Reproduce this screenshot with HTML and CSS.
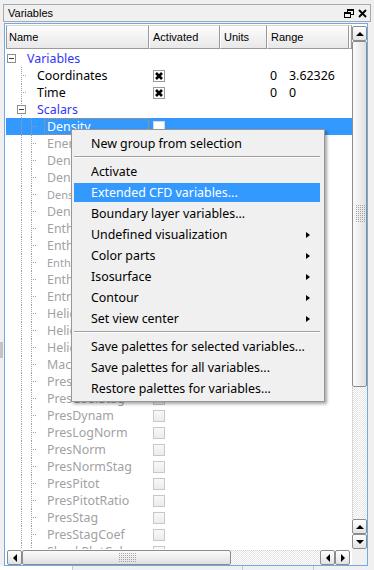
FILE: index.html
```html
<!DOCTYPE html>
<html lang="en">
<head>
<meta charset="UTF-8">
<title>Variables</title>
<link rel="stylesheet" href="styles.css">
</head>
<body>
<div class="title">
  <span>Variables</span>
  <div class="title-btns">
    <svg width="10" height="9" viewBox="0 0 10 9"><g fill="#000"><rect x="3" y="0" width="7" height="2"/><rect x="9" y="2" width="1" height="4"/><rect x="7" y="5" width="3" height="1"/><rect x="3" y="2" width="1" height="1"/><rect x="0" y="3" width="7" height="2"/><rect x="0" y="5" width="1" height="4"/><rect x="6" y="5" width="1" height="4"/><rect x="0" y="8" width="7" height="1"/></g></svg>
    <svg width="9" height="9" viewBox="0 0 9 9"><path d="M1 1L8 8M8 1L1 8" stroke="#000" stroke-width="1.8"/></svg>
  </div>
</div>

<div class="wrap">
  <div class="gutter"><div class="split"></div></div>
  <div class="frame">
    <div class="top">
      <div class="main">
        <div class="hdr">
          <div class="h c-name">Name</div>
          <div class="h c-act">Activated</div>
          <div class="h c-units">Units</div>
          <div class="h c-range">Range</div>
          <div class="h c-fill"></div>
        </div>
        <div class="rows">
          <div class="row">
            <div class="c-name"><span class="g x root"><i class="exp"></i></span><span class="g"></span><span class="lbl blue">Variables</span></div>
          </div>
          <div class="row">
            <div class="c-name"><span class="g"></span><span class="g t"></span><span class="g"></span><span class="lbl">Coordinates</span></div>
            <div class="c-act"><span class="cb on"><svg width="10" height="10" viewBox="0 0 10 10"><path d="M2 2L8 8M8 2L2 8" stroke="#000" stroke-width="2.6"/></svg></span></div>
            <div class="c-units"></div>
            <div class="c-range"><span class="rmin">0</span><span>3.62326</span></div>
          </div>
          <div class="row">
            <div class="c-name"><span class="g"></span><span class="g t"></span><span class="g"></span><span class="lbl">Time</span></div>
            <div class="c-act"><span class="cb on"><svg width="10" height="10" viewBox="0 0 10 10"><path d="M2 2L8 8M8 2L2 8" stroke="#000" stroke-width="2.6"/></svg></span></div>
            <div class="c-units"></div>
            <div class="c-range"><span class="rmin">0</span><span>0</span></div>
          </div>
          <div class="row">
            <div class="c-name"><span class="g"></span><span class="g x"><i class="exp"></i></span><span class="g"></span><span class="lbl blue">Scalars</span></div>
          </div>
          <div class="row sel">
            <div class="c-name"><span class="g"></span><span class="g v"></span><span class="g t"></span><span class="g"></span><span class="lbl focus">Density</span></div>
            <div class="c-act"><span class="cb white"></span></div>
          </div>
          <div id="scalars"></div>
        </div>
      </div>
      <div class="vscroll">
        <div class="sbtn up"></div>
        <div class="vthumb"><span class="grip vg"></span></div>
        <div class="track"></div>
        <div class="sbtn up"></div>
        <div class="sbtn down"></div>
      </div>
    </div>
    <div class="hscroll">
      <div class="sbtn left"></div>
      <div class="hthumb"><span class="grip hg"></span></div>
      <div class="track"></div>
      <div class="sbtn left"></div>
      <div class="sbtn right"></div>
      <div class="corner"></div>
    </div>
  </div>
</div>
<div class="tabs">
  <div class="tab first"></div>
  <div class="tab mid"></div>
  <div class="tab last"></div>
</div>

<div class="menu">
  <div class="mi">New group from selection</div>
  <div class="sep"></div>
  <div class="mi">Activate</div>
  <div class="mi hl">Extended CFD variables...</div>
  <div class="mi">Boundary layer variables...</div>
  <div class="mi sub">Undefined visualization</div>
  <div class="mi sub">Color parts</div>
  <div class="mi sub">Isosurface</div>
  <div class="mi sub">Contour</div>
  <div class="mi sub">Set view center</div>
  <div class="sep"></div>
  <div class="mi">Save palettes for selected variables...</div>
  <div class="mi">Save palettes for all variables...</div>
  <div class="mi">Restore palettes for variables...</div>
</div>

<script>
  const names = [
    ['Energy'], ['DensityLog'], ['DensityNorm'], ['DensityStag', true], ['DensityTot'],
    ['Enthalpy'], ['EnthalpyNorm'], ['EnthalpyStag', true], ['EnthalpyTot'], ['Entropy'],
    ['Helicity'], ['HelicityNorm'], ['HelicityRel'], ['Mach'], ['PresCoef'], ['PresCoefStag'],
    ['PresDynam'], ['PresLogNorm'], ['PresNorm'], ['PresNormStag'], ['PresPitot'],
    ['PresPitotRatio'], ['PresStag'], ['PresStagCoef'], ['ShockPlotCol']
  ];
  const holder = document.getElementById('scalars');
  names.forEach(([name, small]) => {
    const row = document.createElement('div');
    row.className = 'row';
    row.innerHTML =
      '<div class="c-name"><span class="g"></span><span class="g v"></span><span class="g t"></span><span class="g"></span>' +
      '<span class="lbl grey' + (small ? ' small' : '') + '">' + name + '</span></div>' +
      '<div class="c-act"><span class="cb"></span></div>';
    holder.appendChild(row);
  });
</script>
</body>
</html>
```

FILE: styles.css
```css
body {
  margin: 0;
  width: 374px;
  height: 570px;
  overflow: hidden;
  position: relative;
  background: #f0f0f0;
  font-family: "Noto Sans", "DejaVu Sans", sans-serif;
  font-size: 12.4px;
  color: #000;
}
.title {
  margin: 4px 3px 0;
  height: 18px;
  box-sizing: border-box;
  border: 1px solid #a8a8a8;
  display: flex;
  align-items: center;
  padding: 0 3px 0 4px;
  font-family: "Liberation Sans", Arial, sans-serif;
  font-size: 11px;
}
.title-btns {
  margin-left: auto;
  display: flex;
  gap: 4px;
  align-items: center;
}
.wrap {
  display: flex;
  margin-top: 1px;
}
.gutter {
  width: 4px;
}
.split {
  margin-top: 319px;
  width: 3px;
  height: 16px;
  background: #c4c4c4;
}
.frame {
  width: 364px;
  box-sizing: border-box;
  border: 1px solid #70a8ec;
  background: #fff;
  padding: 1px 0 0 1px;
}
.top {
  display: flex;
}
.main {
  width: 346px;
}
.hdr {
  display: flex;
  height: 24px;
  font-family: "Liberation Sans", Arial, sans-serif;
  font-size: 11px;
}
.h {
  box-sizing: border-box;
  height: 24px;
  line-height: 22px;
  padding-left: 3px;
  background: linear-gradient(#fdfdfd, #e8e8e8);
  border: 1px solid #9a9a9a;
  border-left-color: #fff;
  border-top-color: #d6d6d6;
}
.hdr .c-name { padding-left: 2px; border-left-color: #9a9a9a; }
.hdr .c-act { padding-left: 3px; }
.c-name { width: 143px; flex: none; }
.c-act { width: 71px; flex: none; }
.c-units { width: 47px; flex: none; }
.c-range { width: 82px; flex: none; }
.c-fill { width: 3px; flex: none; padding: 0; }

.rows {
  margin-top: 1px;
  height: 499px;
  overflow: hidden;
}
.row {
  display: flex;
  height: 17px;
}
.row .c-name {
  display: flex;
  height: 17px;
}
.row .c-act {
  box-sizing: border-box;
  padding-left: 4px;
  display: flex;
  align-items: center;
}
.row .c-range {
  box-sizing: border-box;
  padding-left: 3px;
  display: flex;
  line-height: 17px;
}
.rmin {
  width: 19px;
}
.g {
  width: 10px;
  flex: none;
  height: 17px;
  display: flex;
  align-items: center;
  justify-content: center;
  background-repeat: no-repeat;
}
.g.v, .g.x {
  background-image: repeating-linear-gradient(#a0a0a0 0 1px, transparent 1px 2px);
  background-size: 1px 100%;
  background-position: 5px 0;
}
.g.x.root {
  background-image: none;
}
.g.t {
  background-image:
    repeating-linear-gradient(#a0a0a0 0 1px, transparent 1px 2px),
    repeating-linear-gradient(90deg, #a0a0a0 0 1px, transparent 1px 2px);
  background-size: 1px 100%, 4px 1px;
  background-position: 5px 0, 7px 8px;
}
.exp {
  width: 9px;
  height: 9px;
  box-sizing: border-box;
  border: 1px solid #8e8e8e;
  background: #fff;
  display: flex;
  align-items: center;
  justify-content: center;
}
.exp::before {
  content: '';
  width: 5px;
  height: 1px;
  background: #404040;
}
.lbl {
  margin-left: 1px;
  line-height: 17px;
  white-space: nowrap;
}
.blue { color: #3434f4; }
.grey { color: #a39fa5; }
.small { font-size: 11px; }
.row.sel {
  background: #3399ff;
}
.row.sel .lbl {
  color: #fff;
}
.lbl.focus {
  flex: 1;
  margin-left: -2px;
  padding-left: 2px;
  box-sizing: border-box;
  border: 1px dotted #e2893a;
  line-height: 15px;
}
.cb {
  width: 12px;
  height: 12px;
  box-sizing: border-box;
  border: 1px solid #c8c8c8;
  background: linear-gradient(#f8f8f8, #ececec);
  display: flex;
  align-items: center;
  justify-content: center;
}
.cb.on {
  border-color: #9a9a9a;
  background: #fff;
}
.cb.white {
  background: #fff;
  border-color: #d8d8d8;
}

.vscroll {
  width: 15px;
  height: 524px;
  display: flex;
  flex-direction: column;
}
.vscroll .sbtn:first-child {
  margin-top: 1px;
}
.sbtn {
  width: 15px;
  height: 15px;
  flex: none;
  box-sizing: border-box;
  border: 1px solid #8c8c8c;
  border-radius: 2px;
  background: linear-gradient(#ffffff, #e2e2e2);
  display: flex;
  align-items: center;
  justify-content: center;
}
.sbtn::before {
  content: '';
  width: 0;
  height: 0;
}
.sbtn.up::before {
  border-left: 4px solid transparent;
  border-right: 4px solid transparent;
  border-bottom: 4px solid #000;
}
.sbtn.down::before {
  border-left: 4px solid transparent;
  border-right: 4px solid transparent;
  border-top: 4px solid #000;
}
.sbtn.left::before {
  border-top: 4px solid transparent;
  border-bottom: 4px solid transparent;
  border-right: 4px solid #000;
}
.sbtn.right::before {
  border-top: 4px solid transparent;
  border-bottom: 4px solid transparent;
  border-left: 4px solid #000;
}
.vthumb {
  height: 346px;
  flex: none;
  box-sizing: border-box;
  border: 1px solid #8c8c8c;
  border-radius: 2px;
  background: linear-gradient(90deg, #fbfbfb, #e0e0e0);
  display: flex;
  align-items: center;
  justify-content: center;
}
.track {
  flex: 1;
  background: repeating-conic-gradient(#e6e6e6 0 25%, #fff 0 50%) 0 0 / 2px 2px;
}
.vscroll .track {
  border-left: 1px dotted #c8c8c8;
}
.hscroll .track {
  border-top: 1px dotted #c8c8c8;
  box-sizing: border-box;
}
.grip {
  background: repeating-conic-gradient(#a4a4a4 0 25%, transparent 0 100%) 0 0 / 2px 2px;
}
.vg {
  width: 10px;
  height: 18px;
}
.hg {
  width: 18px;
  height: 10px;
}
.hscroll {
  display: flex;
  height: 16px;
  align-items: flex-start;
  padding-top: 1px;
  box-sizing: border-box;
}
.hscroll .sbtn:first-child {
  margin-left: 1px;
}
.hscroll .sbtn {
  height: 15px;
}
.hscroll .track {
  height: 15px;
}
.hthumb {
  width: 209px;
  height: 15px;
  flex: none;
  box-sizing: border-box;
  border: 1px solid #8c8c8c;
  border-radius: 2px;
  background: linear-gradient(#fbfbfb, #e0e0e0);
  display: flex;
  align-items: center;
  justify-content: center;
}
.corner {
  width: 15px;
  height: 16px;
  margin-top: -1px;
  margin-left: 2px;
  background: #f0f0f0;
}
.tabs {
  display: flex;
  height: 4px;
}
.tab.first {
  width: 72px;
  background: #fff;
  border-right: 1px solid #c8c8c8;
}
.tab.mid {
  width: 169px;
  border-right: 1px solid #c8c8c8;
}
.tab.last {
  width: 70px;
  border-right: 1px solid #c8c8c8;
}

.menu {
  position: absolute;
  left: 71px;
  top: 129px;
  width: 254px;
  box-sizing: border-box;
  border: 1px solid #979797;
  background: #f0f0f0;
  padding: 3px 0 2px;
  display: flex;
  flex-direction: column;
  box-shadow: 2px 2px 3px rgba(0, 0, 0, 0.35);
}
.mi {
  height: 19px;
  margin: 1px 4px 1px 2px;
  padding: 0 10px 0 17px;
  display: flex;
  align-items: center;
  white-space: nowrap;
}
.mi.hl {
  background: #3399ff;
  color: #fff;
}
.mi.sub::after {
  content: '';
  margin-left: auto;
  width: 0;
  height: 0;
  border-top: 3.5px solid transparent;
  border-bottom: 3.5px solid transparent;
  border-left: 4px solid #000;
}
.sep {
  height: 1px;
  background: #a0a0a0;
  border-bottom: 1px solid #fff;
  margin: 2px 4px 3px 2px;
}
```
